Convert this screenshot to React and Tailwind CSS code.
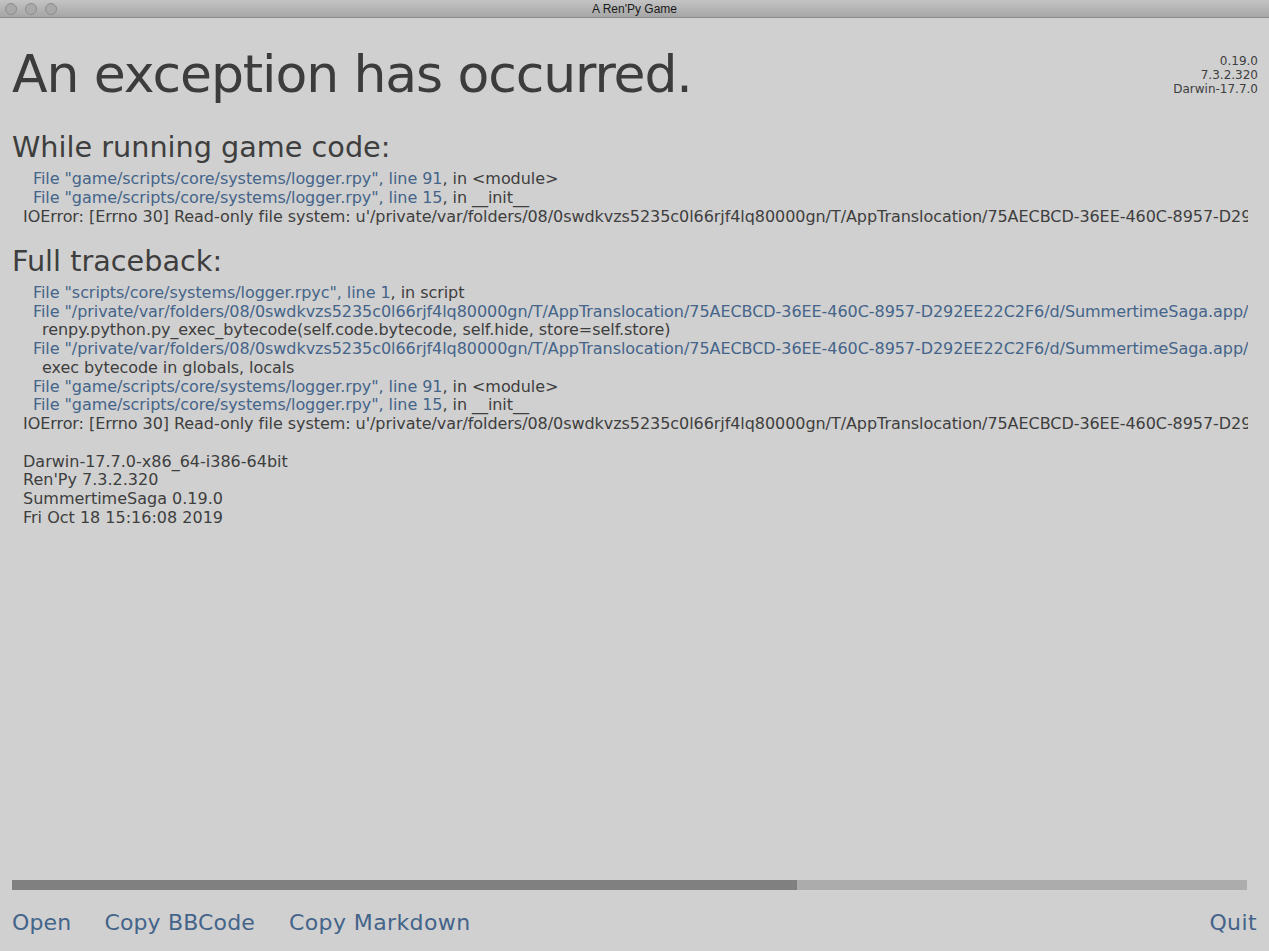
import React from "react";

const PATH =
  "/private/var/folders/08/0swdkvzs5235c0l66rjf4lq80000gn/T/AppTranslocation/75AECBCD-36EE-460C-8957-D292EE22C2F6/d/SummertimeSaga.app/Contents/Resources/autorun/renpy/ast.py";
const IOERR =
  "IOError: [Errno 30] Read-only file system: u'/private/var/folders/08/0swdkvzs5235c0l66rjf4lq80000gn/T/AppTranslocation/75AECBCD-36EE-460C-8957-D292EE22C2F6/d/log.txt'";

function FileLine({ file, line, where }) {
  return (
    <div className="pl-[21px] whitespace-pre">
      <span className="text-[#44648a]">
        File "{file}", line {line}
      </span>
      , in {where}
    </div>
  );
}

function Code({ children }) {
  return <div className="pl-[30px] whitespace-pre">{children}</div>;
}

function Err() {
  return <div className="pl-[11px] whitespace-pre">{IOERR}</div>;
}

export default function App() {
  return (
    <div
      className="w-[1269px] h-[951px] bg-[#d0d0d0] flex flex-col overflow-hidden text-[#3e3e3e]"
      style={{ fontFamily: '"DejaVu Sans", sans-serif' }}
    >
      {/* window chrome */}
      <div className="relative h-[18px] shrink-0 bg-gradient-to-b from-[#c4c4c4] to-[#a6a6a6] border-b border-[#8c8c8c] flex items-center">
        <div className="flex gap-[8px] pl-[5px]">
          <span className="w-[12px] h-[12px] rounded-full bg-[#a9a9a9] border border-[#8d8d8d]" />
          <span className="w-[12px] h-[12px] rounded-full bg-[#a9a9a9] border border-[#8d8d8d]" />
          <span className="w-[12px] h-[12px] rounded-full bg-[#a9a9a9] border border-[#8d8d8d]" />
        </div>
        <div
          className="absolute inset-0 flex items-center justify-center text-[12px] text-[#1a1a1a]"
          style={{ fontFamily: '"Liberation Sans", sans-serif' }}
        >
          A Ren'Py Game
        </div>
      </div>

      {/* content */}
      <div className="flex-1 flex flex-col px-[12px] pr-[21px] min-h-0">
        <div className="flex justify-between items-start">
          <h1 className="text-[52px] leading-[60px] mt-[26px] tracking-[-1.1px] text-[#3c3c3c]">An exception has occurred.</h1>
          <div className="text-[12px] leading-[14px] text-right mt-[36px] -mr-[10px]">
            <div>0.19.0</div>
            <div>7.3.2.320</div>
            <div>Darwin-17.7.0</div>
          </div>
        </div>

        <div className="overflow-hidden">
          <h2 className="text-[28.7px] leading-[34px] mt-[26px]">While running game code:</h2>
          <div className="text-[16px] leading-[19px] mt-[5px] tracking-[-0.06px]">
            <FileLine file="game/scripts/core/systems/logger.rpy" line="91" where="<module>" />
            <FileLine file="game/scripts/core/systems/logger.rpy" line="15" where="__init__" />
            <Err />
          </div>

          <h2 className="text-[28.7px] leading-[34px] mt-[18px]">Full traceback:</h2>
          <div className="text-[16px] leading-[18.7px] mt-[6px] tracking-[-0.06px]">
            <FileLine file="scripts/core/systems/logger.rpyc" line="1" where="script" />
            <div className="pl-[21px] whitespace-pre text-[#44648a]">File "{PATH}", line 1863, in execute</div>
            <Code>renpy.python.py_exec_bytecode(self.code.bytecode, self.hide, store=self.store)</Code>
            <div className="pl-[21px] whitespace-pre text-[#44648a]">File "{PATH.replace("ast.py", "python.py")}", line 2160, in py_exec_bytecode</div>
            <Code>exec bytecode in globals, locals</Code>
            <FileLine file="game/scripts/core/systems/logger.rpy" line="91" where="<module>" />
            <FileLine file="game/scripts/core/systems/logger.rpy" line="15" where="__init__" />
            <Err />
          </div>

          <div className="text-[16px] leading-[18.7px] mt-[19px] pl-[11px]">
            <div>Darwin-17.7.0-x86_64-i386-64bit</div>
            <div>Ren'Py 7.3.2.320</div>
            <div>SummertimeSaga 0.19.0</div>
            <div>Fri Oct 18 15:16:08 2019</div>
          </div>
        </div>

        <div className="flex-1" />

        {/* scrollbar */}
        <div className="h-[10px] shrink-0 bg-[#acacac] flex mr-[1px]">
          <div className="w-[785px] bg-[#808080]" />
        </div>

        {/* footer */}
        <div className="flex items-center shrink-0 text-[22px] text-[#44648a] h-[61px] pt-[4px] -mr-[10px] tracking-[0.15px]">
          <button className="mr-[33px]">Open</button>
          <button className="mr-[34px]">Copy BBCode</button>
          <button className="tracking-[0.4px]">Copy Markdown</button>
          <div className="flex-1" />
          <button className="tracking-[0.4px] mr-[1px]">Quit</button>
        </div>
      </div>
    </div>
  );
}
